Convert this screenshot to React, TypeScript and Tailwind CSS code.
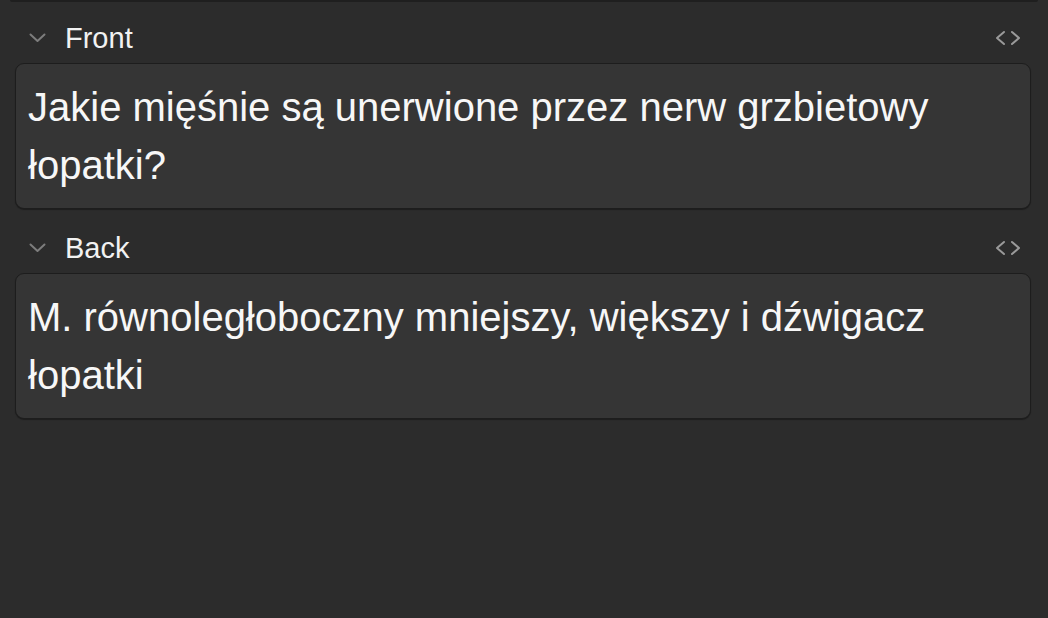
function Chevron() {
  return (
    <svg width="17" height="10" viewBox="0 0 17 10" fill="none" className="text-[#7d7d7d]">
      <path d="M1.5 1.5 L8.5 8 L15.5 1.5" stroke="currentColor" strokeWidth="2" strokeLinecap="round" strokeLinejoin="round" />
    </svg>
  );
}

function CodeToggle() {
  return (
    <svg width="28" height="16" viewBox="0 0 28 16" fill="none" className="text-[#9a9a9a]">
      <path d="M10 2 L3 8 L10 14" stroke="currentColor" strokeWidth="2" strokeLinecap="round" strokeLinejoin="round" />
      <path d="M18 2 L25 8 L18 14" stroke="currentColor" strokeWidth="2" strokeLinecap="round" strokeLinejoin="round" />
    </svg>
  );
}

function Field({ label, text }: { label: string; text: string }) {
  return (
    <div>
      <div className="h-[50px] flex items-center justify-between pl-[29px] pr-[26px]">
        <div className="flex items-center gap-[19px]">
          <Chevron />
          <span className="text-[29px] text-[#f2f2f2] leading-none">{label}</span>
        </div>
        <CodeToggle />
      </div>
      <div className="mx-[15px] mr-[17px] rounded-[9px] border border-[#1d1d1d] bg-[#353535] px-[12px] py-[14px] shadow-[0_1px_1px_rgba(0,0,0,0.35)]">
        <div className="text-[40px] leading-[58px] text-[#f7f7f7]">{text}</div>
      </div>
    </div>
  );
}

export default function App() {
  return (
    <div
      className="w-[1048px] h-[618px] bg-[#2c2c2c] overflow-hidden"
      style={{ fontFamily: '"Liberation Sans", Arial, sans-serif' }}
    >
      {/* bottom edge of the previous panel */}
      <div className="mx-[10px] h-[2px] bg-[#1f1f1f] rounded-b-[4px]" />
      <div className="pt-[11px] flex flex-col gap-[14px]">
        <Field label="Front" text="Jakie mięśnie są unerwione przez nerw grzbietowy łopatki?" />
        <Field label="Back" text="M. równoległoboczny mniejszy, większy i dźwigacz łopatki" />
      </div>
    </div>
  );
}
